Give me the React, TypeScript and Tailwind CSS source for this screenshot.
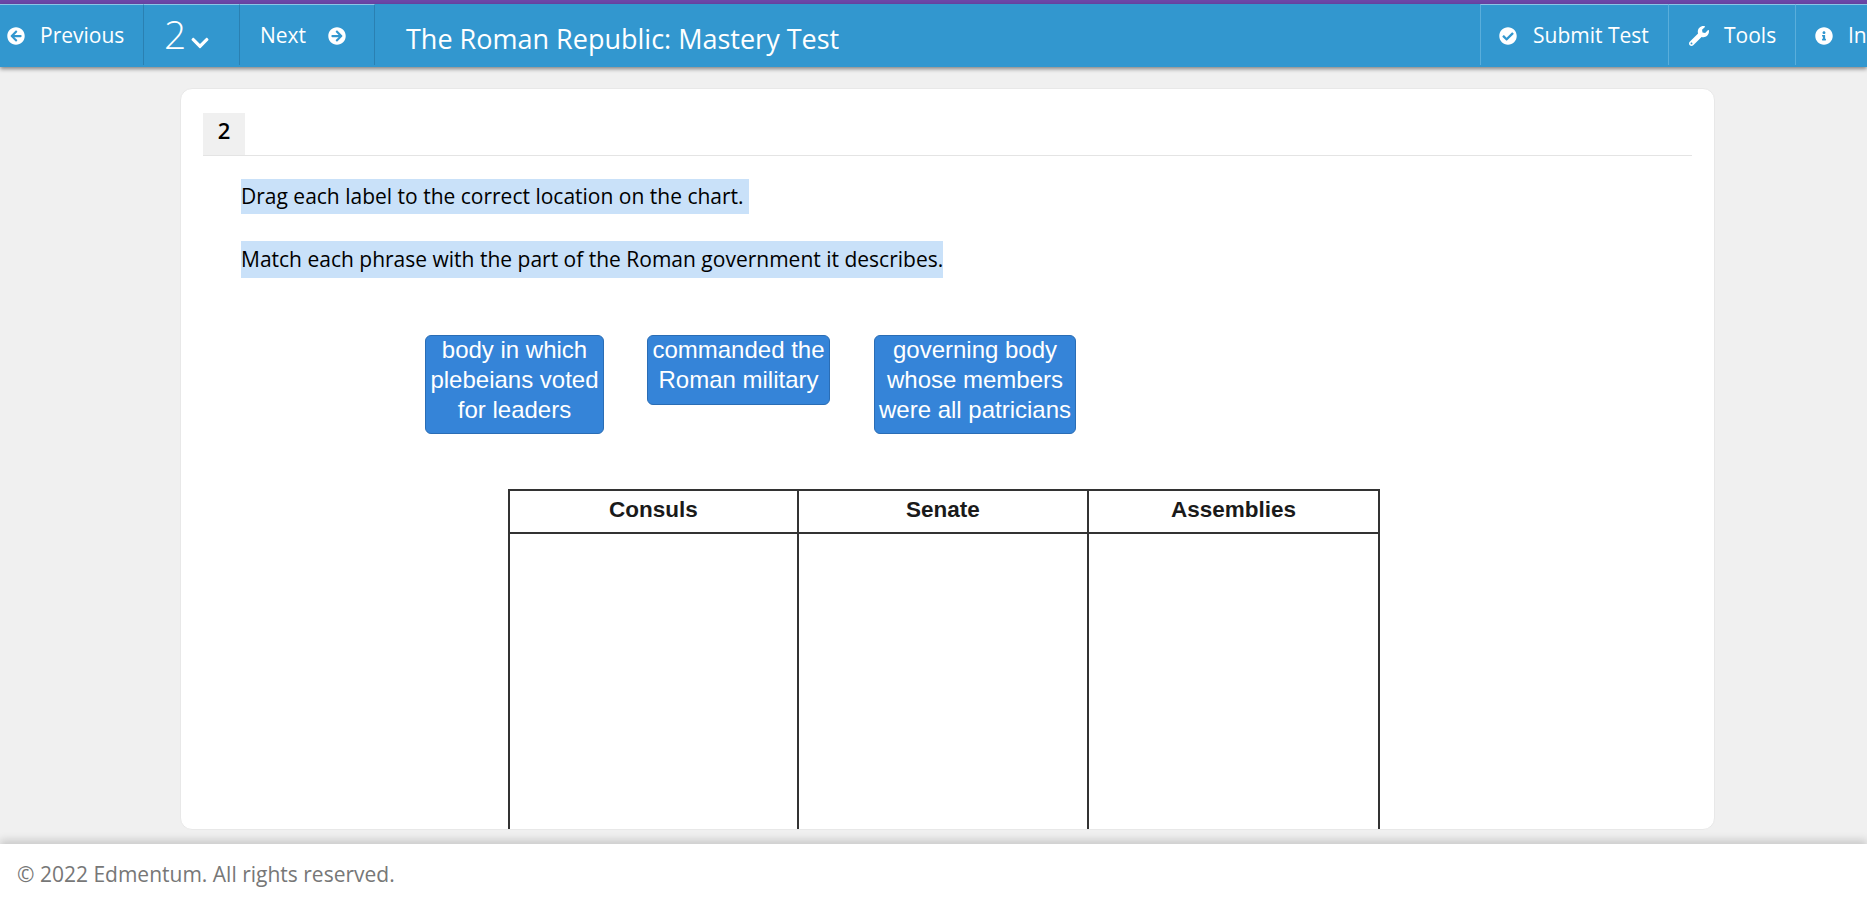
import { FaArrowCircleLeft, FaArrowCircleRight, FaCheckCircle, FaChevronDown, FaInfoCircle, FaWrench } from 'react-icons/fa';

const labelClass = "rounded-[6px] border border-[#2a6db5] bg-[#3584d8] text-center font-['Liberation_Sans',Arial,sans-serif] text-[24px] leading-[30px] text-white";

const App = () => {
    return (
        <div className="flex h-[897px] w-[1867px] flex-col overflow-hidden bg-[#f0f0f0] font-['Open_Sans',sans-serif]">
            <div className="h-[4px] shrink-0 bg-[#6c46a8]" />

            {/* barre de navigation */}
            <nav className="z-10 flex h-[63px] shrink-0 items-stretch bg-[#3297cf] pb-[2px] text-white shadow-[0_2px_4px_rgba(0,0,0,0.45)]">
                <div className="flex w-[144px] items-center gap-[15px] border-t border-r border-t-[#8cc4e6] border-r-[#2a80b2] pt-[2px] pl-[7px] text-[21px]">
                    <FaArrowCircleLeft className="text-[18px]" />
                    <span>Previous</span>
                </div>
                <div className="flex w-[96px] items-center gap-[4px] border-t border-r border-t-[#8cc4e6] border-r-[#2a80b2] pb-[2px] pl-[20px] text-[39px] font-light">
                    <span>2</span>
                    <FaChevronDown className="mt-[18px] text-[20px]" />
                </div>
                <div className="flex w-[135px] items-center gap-[22px] border-t border-r border-t-[#8cc4e6] border-r-[#2a80b2] pt-[2px] pl-[20px] text-[21px]">
                    <span>Next</span>
                    <FaArrowCircleRight className="text-[18px]" />
                </div>
                <h1 className="ml-[31px] flex-1 pt-[16px] text-[27px] leading-[38px]">The Roman Republic: Mastery Test</h1>
                <div className="flex w-[188px] items-center gap-[16px] border-t border-l border-t-[#8cc4e6] border-l-[#5aaedb] pt-[2px] pl-[18px] text-[21px]">
                    <FaCheckCircle className="text-[18px]" />
                    <span>Submit Test</span>
                </div>
                <div className="flex w-[127px] items-center gap-[15px] border-t border-l border-t-[#8cc4e6] border-l-[#5aaedb] pt-[2px] pl-[20px] text-[21px]">
                    <FaWrench className="text-[20px]" />
                    <span>Tools</span>
                </div>
                <div className="flex w-[72px] items-center gap-[15px] overflow-hidden border-t border-l border-t-[#8cc4e6] border-l-[#5aaedb] pt-[2px] pl-[19px] text-[21px]">
                    <FaInfoCircle className="shrink-0 text-[18px]" />
                    <span>Info</span>
                </div>
            </nav>

            {/* contenu */}
            <main className="min-h-0 flex-1 pt-[21px]">
                <div className="ml-[180px] h-[742px] w-[1535px] overflow-hidden rounded-[12px] border border-[#e8e8e8] bg-white px-[22px] pt-[24px]">
                    <div className="border-b border-[#e4e4e4]">
                        <div className="flex h-[42px] w-[42px] items-center justify-center bg-[#f0f0f0] pb-[8px] text-[22px] font-semibold text-black">2</div>
                    </div>
                    <div className="pl-[38px] pt-[23px] text-[21px] leading-[28px] text-black">
                        <p className="w-fit bg-[#c9e1f9] pr-[5px] leading-[35px]">Drag each label to the correct location on the chart.</p>
                        <p className="mt-[27px] w-fit bg-[#c9e1f9] leading-[37px]">Match each phrase with the part of the Roman government it describes.</p>
                    </div>
                    <div className="ml-[222px] mt-[57px] flex items-start">
                        <div className={`${labelClass} h-[99px] w-[179px]`}><div className="-mt-[1px]">body in which<br />plebeians voted<br />for leaders</div></div>
                        <div className={`${labelClass} ml-[43px] h-[70px] w-[183px]`}><div className="-mt-[1px]">commanded the<br />Roman military</div></div>
                        <div className={`${labelClass} ml-[44px] h-[99px] w-[202px]`}><div className="-mt-[1px]">governing body<br />whose members<br />were all patricians</div></div>
                    </div>
                    <div className="ml-[305px] mt-[55px] grid w-[872px] grid-cols-[289px_290px_1fr] border-2 border-[#333] font-['Liberation_Sans',Arial,sans-serif] text-[22.5px] font-bold text-[#1a1a1a]">
                        <div className="flex h-[43px] items-center justify-center border-r-2 border-b-2 border-[#333] pb-[3px]">Consuls</div>
                        <div className="flex h-[43px] items-center justify-center border-r-2 border-b-2 border-[#333] pb-[3px]">Senate</div>
                        <div className="flex h-[43px] items-center justify-center border-b-2 border-[#333] pb-[3px]">Assemblies</div>
                        <div className="h-[400px] border-r-2 border-[#333]" />
                        <div className="h-[400px] border-r-2 border-[#333]" />
                        <div className="h-[400px]" />
                    </div>
                </div>
            </main>

            {/* pied de page */}
            <footer className="relative flex h-[53px] shrink-0 items-center bg-white pl-[17px] pt-[9px] text-[21px] text-[#777] shadow-[0_-4px_8px_rgba(0,0,0,0.16)]">
                © 2022 Edmentum. All rights reserved.
            </footer>
        </div>
    );
};

export default App;
